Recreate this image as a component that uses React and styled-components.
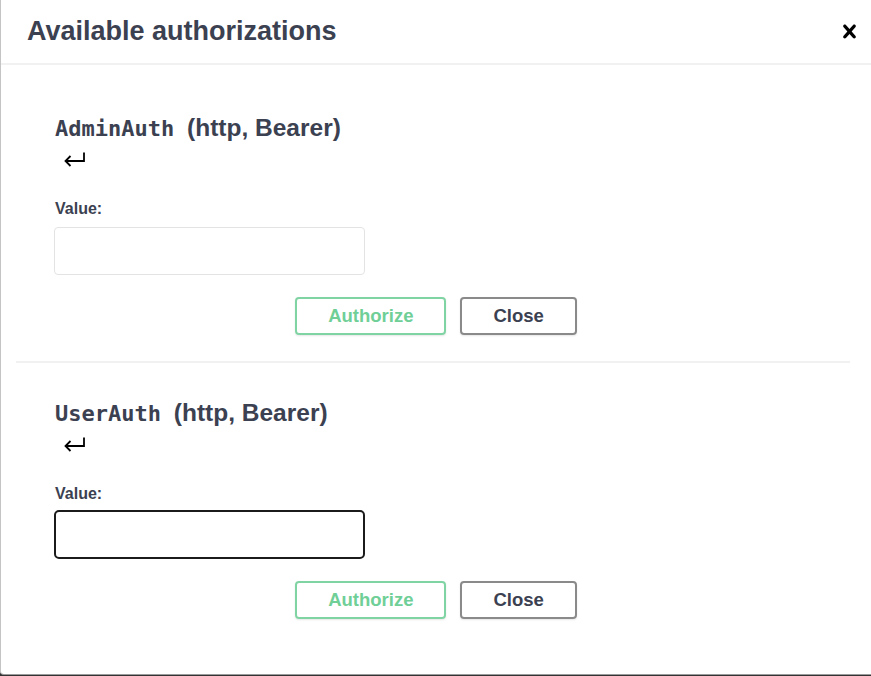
import styled, { createGlobalStyle } from "styled-components";

const GlobalStyle = createGlobalStyle`
  html, body {
    margin: 0;
    padding: 0;
    background: #333;
  }
  body {
    font-family: "Liberation Sans", Arial, sans-serif;
  }
`;

const schemes = [
  { name: "AdminAuth", scheme: "http, Bearer", focused: false },
  { name: "UserAuth", scheme: "http, Bearer", focused: true },
];

export default function App() {
  return (
    <>
      <GlobalStyle />
      <StyledModal>
        <StyledHeader>
          <StyledTitle>Available authorizations</StyledTitle>
          <StyledCloseModal aria-label="Close">
            <svg width="27" height="27" viewBox="0 0 20 20">
              <path
                fill="#000"
                d="M14.348 14.849c-.469.469-1.229.469-1.697 0L10 11.819l-2.651 3.029c-.469.469-1.229.469-1.697 0-.469-.469-.469-1.229 0-1.697l2.758-3.15-2.759-3.152c-.469-.469-.469-1.228 0-1.697.469-.469 1.228-.469 1.697 0L10 8.183l2.651-3.031c.469-.469 1.228-.469 1.697 0 .469.469.469 1.229 0 1.697l-2.758 3.152 2.758 3.15c.469.469.469 1.229 0 1.698z"
              />
            </svg>
          </StyledCloseModal>
        </StyledHeader>
        <StyledContent>
          {schemes.map((s, i) => (
            <StyledAuthContainer key={s.name} $last={i === schemes.length - 1}>
              <StyledFields>
                <StyledSchemeTitle>
                  <code>{s.name}</code>&nbsp;({s.scheme})
                </StyledSchemeTitle>
                <StyledReturn>
                  <svg width="23" height="16" viewBox="0 0 23 16">
                    <path
                      d="M21 1.5V10H2.5M7.5 5L2.5 10L7.5 15"
                      fill="none"
                      stroke="#000"
                      strokeWidth="1.8"
                    />
                  </svg>
                </StyledReturn>
                <StyledLabel>Value:</StyledLabel>
                <StyledInput type="text" $focused={s.focused} />
              </StyledFields>
              <StyledButtons>
                <StyledButton $variant="authorize">Authorize</StyledButton>
                <StyledButton>Close</StyledButton>
              </StyledButtons>
            </StyledAuthContainer>
          ))}
        </StyledContent>
      </StyledModal>
    </>
  );
}

const StyledModal = styled.div`
  box-sizing: border-box;
  width: 871px;
  height: 675px;
  background: #fff;
  border-left: 1px solid #c4c4c4;
  border-bottom: 1px solid #9b9b9b;
  border-bottom-left-radius: 4px;
  overflow: hidden;
`;

const StyledHeader = styled.div`
  display: flex;
  align-items: center;
  height: 63px;
  border-bottom: 2px solid #f1f1f1;
`;

const StyledTitle = styled.h3`
  flex: 1;
  margin: 0;
  padding: 0 0 0 26px;
  font-size: 27px;
  font-weight: 700;
  color: #3b4151;
`;

const StyledCloseModal = styled.button`
  display: flex;
  align-items: center;
  padding: 0 8px 0 0;
  margin: 0;
  border: none;
  background: none;
  cursor: pointer;
`;

const StyledContent = styled.div`
  padding: 13px 21px 0 15px;
`;

const StyledAuthContainer = styled.div`
  padding: 36px 0 26px;
  border-bottom: ${(p) => (p.$last ? "none" : "2px solid #f1f1f1")};
`;

const StyledFields = styled.div`
  display: flex;
  flex-direction: column;
  align-items: flex-start;
  padding-left: 39px;
`;

const StyledSchemeTitle = styled.h4`
  margin: 0;
  line-height: 28px;
  font-size: 24.5px;
  font-weight: 700;
  color: #3b4151;
  code {
    margin-right: 6px;
    font-family: "DejaVu Sans Mono", "Liberation Mono", monospace;
    font-size: 22px;
    font-weight: 700;
  }
`;

const StyledReturn = styled.div`
  display: flex;
  align-items: flex-start;
  height: 30px;
  padding: 8px 0 0 8px;
  box-sizing: border-box;
`;

const StyledLabel = styled.label`
  margin-top: 26px;
  line-height: 20px;
  font-size: 16px;
  font-weight: 700;
  color: #3b4151;
`;

const StyledInput = styled.input`
  box-sizing: border-box;
  width: 311px;
  height: ${(p) => (p.$focused ? "49px" : "48px")};
  margin: ${(p) => (p.$focused ? "6px" : "8px")} 0 0 -1px;
  padding: 0 10px;
  background: #fff;
  border: ${(p) => (p.$focused ? "2px solid #1b1b1b" : "1px solid #e3e3e3")};
  border-radius: ${(p) => (p.$focused ? "5px" : "4px")};
  outline: none;
  font-family: "Liberation Sans", Arial, sans-serif;
  font-size: 16px;
`;

const StyledButtons = styled.div`
  display: flex;
  justify-content: center;
  gap: 14px;
  margin-top: 22px;
  padding-left: 6px;
`;

const StyledButton = styled.button`
  box-sizing: border-box;
  height: 38px;
  padding: 0 31px;
  background: transparent;
  border: 2px solid ${(p) => (p.$variant === "authorize" ? "#80d4a4" : "#8a8a8a")};
  border-radius: 4px;
  box-shadow: 0 1px 2px rgba(0, 0, 0, 0.1);
  font-family: "Liberation Sans", Arial, sans-serif;
  font-size: 18.5px;
  font-weight: 700;
  color: ${(p) => (p.$variant === "authorize" ? "#6fcf97" : "#3b4151")};
  cursor: pointer;
`;
